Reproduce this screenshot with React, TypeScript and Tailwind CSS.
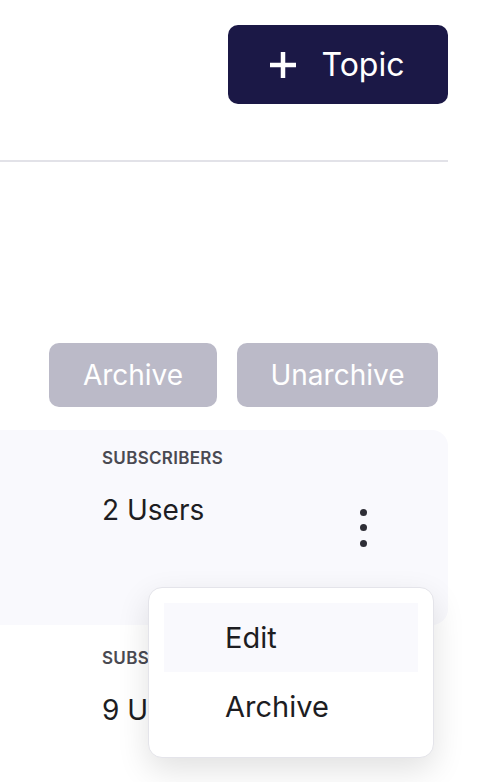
import React from "react";

export default function App() {
  return (
    <div
      className="relative w-[486px] h-[782px] overflow-hidden bg-white"
      style={{ fontFamily: "Inter, 'Noto Sans', sans-serif" }}
    >
      <div className="flex justify-end pt-[25px] pr-[38px]">
        <button className="flex h-[79px] w-[220px] items-center justify-center gap-[24px] rounded-[10px] bg-[#1b1846] text-[32px] text-white">
          <svg width="30" height="30" viewBox="0 0 30 30" className="-ml-[4px]">
            <path d="M15 2v26M2 15h26" stroke="white" strokeWidth="4.5" />
          </svg>
          <span>Topic</span>
        </button>
      </div>
      <div className="mt-[56px] h-[2px] w-[448px] bg-[#e2e2e8]" />
      <div className="mt-[181px] flex justify-end gap-[20px] pr-[48px]">
        <button className="flex h-[64px] w-[168px] items-center justify-center rounded-[10px] bg-[#bbbac8] text-[28px] text-white">
          Archive
        </button>
        <button className="flex h-[64px] w-[201px] items-center justify-center rounded-[10px] bg-[#bbbac8] text-[28px] text-white">
          Unarchive
        </button>
      </div>
      <div className="mt-[23px] flex h-[195px] w-[448px] rounded-r-[16px] bg-[#f9f9fd]">
        <div className="pl-[102px] pt-[17px]">
          <div className="text-[17px] font-semibold leading-[22px] tracking-[0.3px] text-[#4a4a52]">SUBSCRIBERS</div>
          <div className="mt-[24px] text-[28px] leading-[34px] text-[#1d1d22]">2 Users</div>
        </div>
        <div className="ml-auto mr-[81px] flex flex-col items-center gap-[8.5px] self-center">
          <span className="h-[7px] w-[7px] rounded-full bg-[#2e2e36]" />
          <span className="h-[7px] w-[7px] rounded-full bg-[#2e2e36]" />
          <span className="h-[7px] w-[7px] rounded-full bg-[#2e2e36]" />
        </div>
      </div>
      <div className="pl-[102px] pt-[22px]">
        <div className="text-[17px] font-semibold leading-[22px] tracking-[0.3px] text-[#4a4a52]">SUBSCRIBERS</div>
        <div className="mt-[24px] text-[28px] leading-[34px] text-[#1d1d22]">9 Users</div>
      </div>
      <div className="absolute left-[148px] top-[587px] w-[286px] rounded-[14px] border border-[#e4e4ea] bg-white p-[15px] shadow-[0_12px_32px_rgba(0,0,0,0.12)]">
        <div className="flex h-[69px] items-center bg-[#f9f9fd] pl-[61px] text-[29px] text-[#1d1d22]">Edit</div>
        <div className="flex h-[70px] items-center pl-[61px] text-[29px] text-[#1d1d22]">Archive</div>
      </div>
    </div>
  );
}
